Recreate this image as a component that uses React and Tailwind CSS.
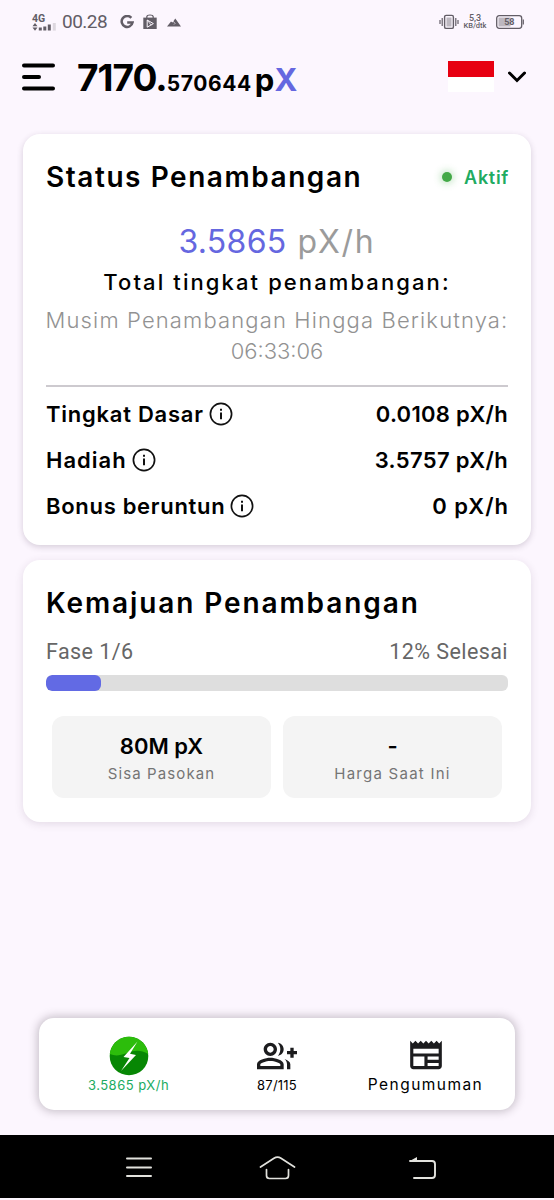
import React from "react";
import { MdOutlineGroupAdd, MdOutlineNewspaper } from "react-icons/md";

const rates = [
  { label: "Tingkat Dasar", value: "0.0108 pX/h", labelClass: "tracking-[0.75px]", valueClass: "tracking-[0.3px]" },
  { label: "Hadiah", value: "3.5757 pX/h", labelClass: "tracking-[1px]", valueClass: "tracking-[0.35px]" },
  { label: "Bonus beruntun", value: "0 pX/h", labelClass: "tracking-[0.7px]", valueClass: "mr-[-1px] tracking-[1px]" },
];

const InfoIcon = () => (
  <svg width="24" height="24" viewBox="0 0 24 24" fill="none" stroke="#111" strokeWidth="1.7">
    <circle cx="12" cy="12" r="10.6" />
    <path d="M12 10.5v6.7" strokeWidth="2" />
    <path d="M12 6.8v2" strokeWidth="2" />
  </svg>
);

const StatusBar = () => (
  <div className="flex h-11 items-center justify-between pl-8 pr-[30px] text-[#625d66] font-[Roboto,sans-serif]">
    <div className="flex items-center">
      <div className="flex w-6 flex-col">
        <span className="text-[10.5px] font-bold leading-[9px]">4G</span>
        <svg width="24" height="8" viewBox="0 0 24 8" fill="currentColor">
          <path d="M.5 3.200 3 0l2.500 3.200zM.5 4.600h5L3 7.800z" />
          <path d="M6.800 4.600h3v3h-3zM11.300 3.600h3v4h-3zM15.800 1.600h3v6h-3z" />
          <path d="M20.800 0h3v7.600h-3z" opacity=".2" />
        </svg>
      </div>
      <span className="ml-1.5 text-[19px] tracking-[-0.5px]">00.28</span>
      <svg className="ml-[13px]" width="14" height="14" viewBox="0 0 14 14" fill="none" stroke="currentColor" strokeWidth="2.500">
        <path d="M11.300 2.800A5.500 5.500 0 1 0 12.600 7.400H7.200" />
      </svg>
      <svg className="ml-[9px]" width="14" height="16" viewBox="0 0 14 16">
        <path d="M3.800 4V2.600Q4 1 7 1t3.200 1.600V4" fill="none" stroke="currentColor" strokeWidth="1.200" />
        <path d="M.3 3.600h13.400V15H.3z" fill="currentColor" />
        <path d="m4.200 6 6.200 3.600-6.200 3.600z" fill="none" stroke="#fcf6fe" strokeWidth="1" />
        <path d="m4.200 6 4 5.200" fill="none" stroke="#fcf6fe" strokeWidth=".8" />
      </svg>
      <svg className="ml-2.5" width="14" height="9" viewBox="0 0 14 9" fill="currentColor">
        <path d="M0 8.500 4 3.500l1.500 1L8.300.6 14 8.500z" />
        <path d="m6.200 3.200 1.800 2.300-1 1" fill="none" stroke="#fcf6fe" strokeWidth=".7" />
      </svg>
    </div>
    <div className="flex items-center">
      <svg width="20" height="16" viewBox="0 0 20 16" fill="none" stroke="currentColor">
        <rect x="5.600" y="1.400" width="8.800" height="13" rx="1.500" strokeWidth="1.400" />
        <path d="M7.500 3.500h5v9h-5z" fill="#bdb8c0" stroke="none" />
        <path d="M3.200 4v8M16.800 4v8M1 6v4M19 6v4" strokeWidth="1.200" />
      </svg>
      <div className="ml-1 flex w-6 flex-col items-center whitespace-nowrap font-medium">
        <span className="text-[9px] leading-[8px]">5,3</span>
        <span className="text-[7.5px] leading-[8px]">KB/dtk</span>
      </div>
      <svg className="ml-[9px]" width="28" height="14" viewBox="0 0 28 14">
        <rect x=".7" y=".7" width="25" height="12.600" rx="2.500" fill="none" stroke="currentColor" strokeWidth="1.300" />
        <path d="M2.500 2.500h12v9h-12z" fill="#bdb8c0" />
        <path d="M27.300 4.500v5" stroke="currentColor" strokeWidth="1.200" />
        <text x="13.300" y="10.300" textAnchor="middle" fontSize="9" fontWeight="700" fill="currentColor">58</text>
      </svg>
    </div>
  </div>
);

const Header = () => (
  <div className="flex h-[90px] items-start justify-between pl-[22px] pr-7">
    <div className="flex items-start">
      <svg className="mt-[18px]" width="33" height="30" viewBox="0 0 33 30" stroke="#000" strokeWidth="4" strokeLinecap="round">
        <path d="M2 3.500h29M2 15h15M2 26.500h29" />
      </svg>
      <div className="ml-[22px] flex h-[68px] items-baseline whitespace-nowrap font-bold leading-[68px]">
        <span className="text-[37px] tracking-[-1px]">7170.</span>
        <span className="text-[21px] tracking-[0.6px]">570644</span>
        <span className="ml-[3px] text-[31px] tracking-[1px]">p<span className="text-[#6567e0]">X</span></span>
      </div>
    </div>
    <div className="flex items-center pt-[17px]">
      <div className="flex h-[31px] w-[46px] flex-col bg-white">
        <div className="h-4 bg-[#e70011]" />
      </div>
      <svg className="ml-[14px]" width="18" height="12" viewBox="0 0 18 12" fill="none" stroke="#000" strokeWidth="3">
        <path d="m1.500 2 7.500 7.500L16.500 2" strokeLinecap="round" />
      </svg>
    </div>
  </div>
);

const MiningStatus = () => (
  <div className="mx-[23px] h-[411px] rounded-[17px] bg-white px-[23px] pt-[23px] shadow-[0_2px_6px_rgba(60,40,70,0.2)]">
    <div className="flex h-10 items-center justify-between whitespace-nowrap">
      <h2 className="text-[28px] font-semibold tracking-[1.55px]">Status Penambangan</h2>
      <div className="flex items-center">
        <span className="size-[10px] rounded-full bg-[#43a947] shadow-[0_0_7px_2px_rgba(76,175,80,0.3)]" />
        <span className="ml-3 mr-[-1px] text-[18px] font-semibold tracking-[0.7px] text-[#20ab61]">Aktif</span>
      </div>
    </div>
    <div className="mt-[22px] flex flex-col items-center whitespace-nowrap">
      <p className="text-[32px] leading-[46px] text-[#9b9b9b]">
        <span className="tracking-[0.3px] text-[#6567e0]">3.5865</span>
        <span className="tracking-[1.8px]"> pX/h</span>
      </p>
      <p className="text-[22px] font-medium leading-[34px] tracking-[2.1px]">Total tingkat penambangan:</p>
      <p className="mt-1.5 text-[22px] font-light leading-[31px] tracking-[1.14px] text-[#929292]">Musim Penambangan Hingga Berikutnya:</p>
      <p className="text-[22px] font-light leading-[31px] text-[#929292]">06:33:06</p>
    </div>
    <hr className="mt-[18px] border-t-2 border-[#cdcacf]" />
    <div className="mt-1 flex flex-col">
      {rates.map((rate) => (
        <div key={rate.label} className="flex h-[46px] items-center justify-between whitespace-nowrap text-[22px] font-semibold">
          <div className="flex items-center gap-[5px]">
            <span className={rate.labelClass}>{rate.label}</span>
            <InfoIcon />
          </div>
          <span className={rate.valueClass}>{rate.value}</span>
        </div>
      ))}
    </div>
  </div>
);

const MiningProgress = () => (
  <div className="mx-[23px] mt-[15px] h-[262px] rounded-[17px] bg-white px-[23px] pt-[23px] shadow-[0_2px_8px_rgba(60,40,70,0.13)]">
    <h2 className="whitespace-nowrap text-[28px] font-semibold leading-10 tracking-[1.9px]">Kemajuan Penambangan</h2>
    <div className="mt-[14px] flex justify-between font-[Roboto,sans-serif] text-[21.5px] leading-[30px] tracking-[0.42px] text-[#666]">
      <span>Fase 1/6</span>
      <span>12% Selesai</span>
    </div>
    <div className="mt-2 h-4 overflow-hidden rounded-md bg-[#dedede]">
      <div className="h-full w-[12%] rounded-md bg-[#626ae4]" />
    </div>
    <div className="mt-[25px] grid grid-cols-2 gap-3 px-1.5">
      <div className="flex h-[82px] flex-col items-center rounded-xl bg-[#f4f4f4] pt-[15px]">
        <span className="text-[22px] font-semibold leading-[30px]">80M pX</span>
        <span className="text-[15px] leading-[25px] tracking-[1.1px] text-[#757575]">Sisa Pasokan</span>
      </div>
      <div className="flex h-[82px] flex-col items-center rounded-xl bg-[#f4f4f4] pt-[15px]">
        <span className="text-[22px] font-semibold leading-[30px]">-</span>
        <span className="text-[15px] leading-[25px] tracking-[1.25px] text-[#757575]">Harga Saat Ini</span>
      </div>
    </div>
  </div>
);

const BottomNav = () => (
  <div className="mx-[39px] mt-[196px] flex h-[92px] whitespace-nowrap rounded-[15px] bg-white pt-[18px] shadow-[0_0_9px_2px_rgba(50,40,50,0.25)]">
    <div className="flex w-[179px] flex-col items-center">
      <svg width="40" height="40" viewBox="0 0 40 40">
        <circle cx="20" cy="20" r="19.300" fill="#078704" />
        <path d="M.8 18A19.300 19.300 0 0 1 39.200 18C32 14 26 14 18 17S6 20 .8 18z" fill="#2cbd0b" />
        <path d="M28.500 5.500 14.500 21l6 1-8.500 13L27 19l-6-1.200z" fill="#fff" />
      </svg>
      <span className="mt-px text-[13px] leading-4 tracking-[0.5px] text-[#20ab61]">3.5865 pX/h</span>
    </div>
    <div className="flex w-[118px] flex-col items-center">
      <MdOutlineGroupAdd className="size-10 text-[#1c1c1e]" />
      <span className="mt-px text-[13px] leading-4 tracking-[0.2px]">87/115</span>
    </div>
    <div className="flex w-[179px] flex-col items-center">
      <MdOutlineNewspaper className="size-[38px] text-[#1c1c1e]" />
      <span className="mt-[3px] text-[15.5px] leading-4 tracking-[1.45px]">Pengumuman</span>
    </div>
  </div>
);

const SystemNav = () => (
  <div className="mt-[25px] flex h-[63px] items-center bg-black pl-[126px] pt-[3px]">
    <svg width="26" height="22" viewBox="0 0 26 22" stroke="#e2e2dd" strokeWidth="2" strokeLinecap="round">
      <path d="M1 1.500h24M1 10.500h24M1 19h24" />
    </svg>
    <svg className="ml-[107px]" width="37" height="26" viewBox="0 0 37 26" fill="none" stroke="#e2e2dd" strokeWidth="1.700" strokeLinecap="round">
      <path d="M1.500 12 15 3.200q3.500-2.200 7 0L35.500 12M7.500 14.500v6q0 3 3 3h16q3 0 3-3v-6" />
    </svg>
    <svg className="ml-[113px]" width="28" height="24" viewBox="0 0 28 24" fill="none" stroke="#e2e2dd" strokeWidth="1.900">
      <path d="M1 5h22q3 0 3 3v11q0 3-3 3H5" strokeLinecap="round" />
      <path d="M.8 5 8 1v4z" fill="#e2e2dd" stroke="none" />
    </svg>
  </div>
);

const App = () => {
  return (
    <div className="h-[1200px] w-[554px] overflow-hidden bg-[#fcf6fe] font-[Inter,sans-serif] text-black">
      <StatusBar />
      <Header />
      <MiningStatus />
      <MiningProgress />
      <BottomNav />
      <SystemNav />
    </div>
  );
};

export default App;
